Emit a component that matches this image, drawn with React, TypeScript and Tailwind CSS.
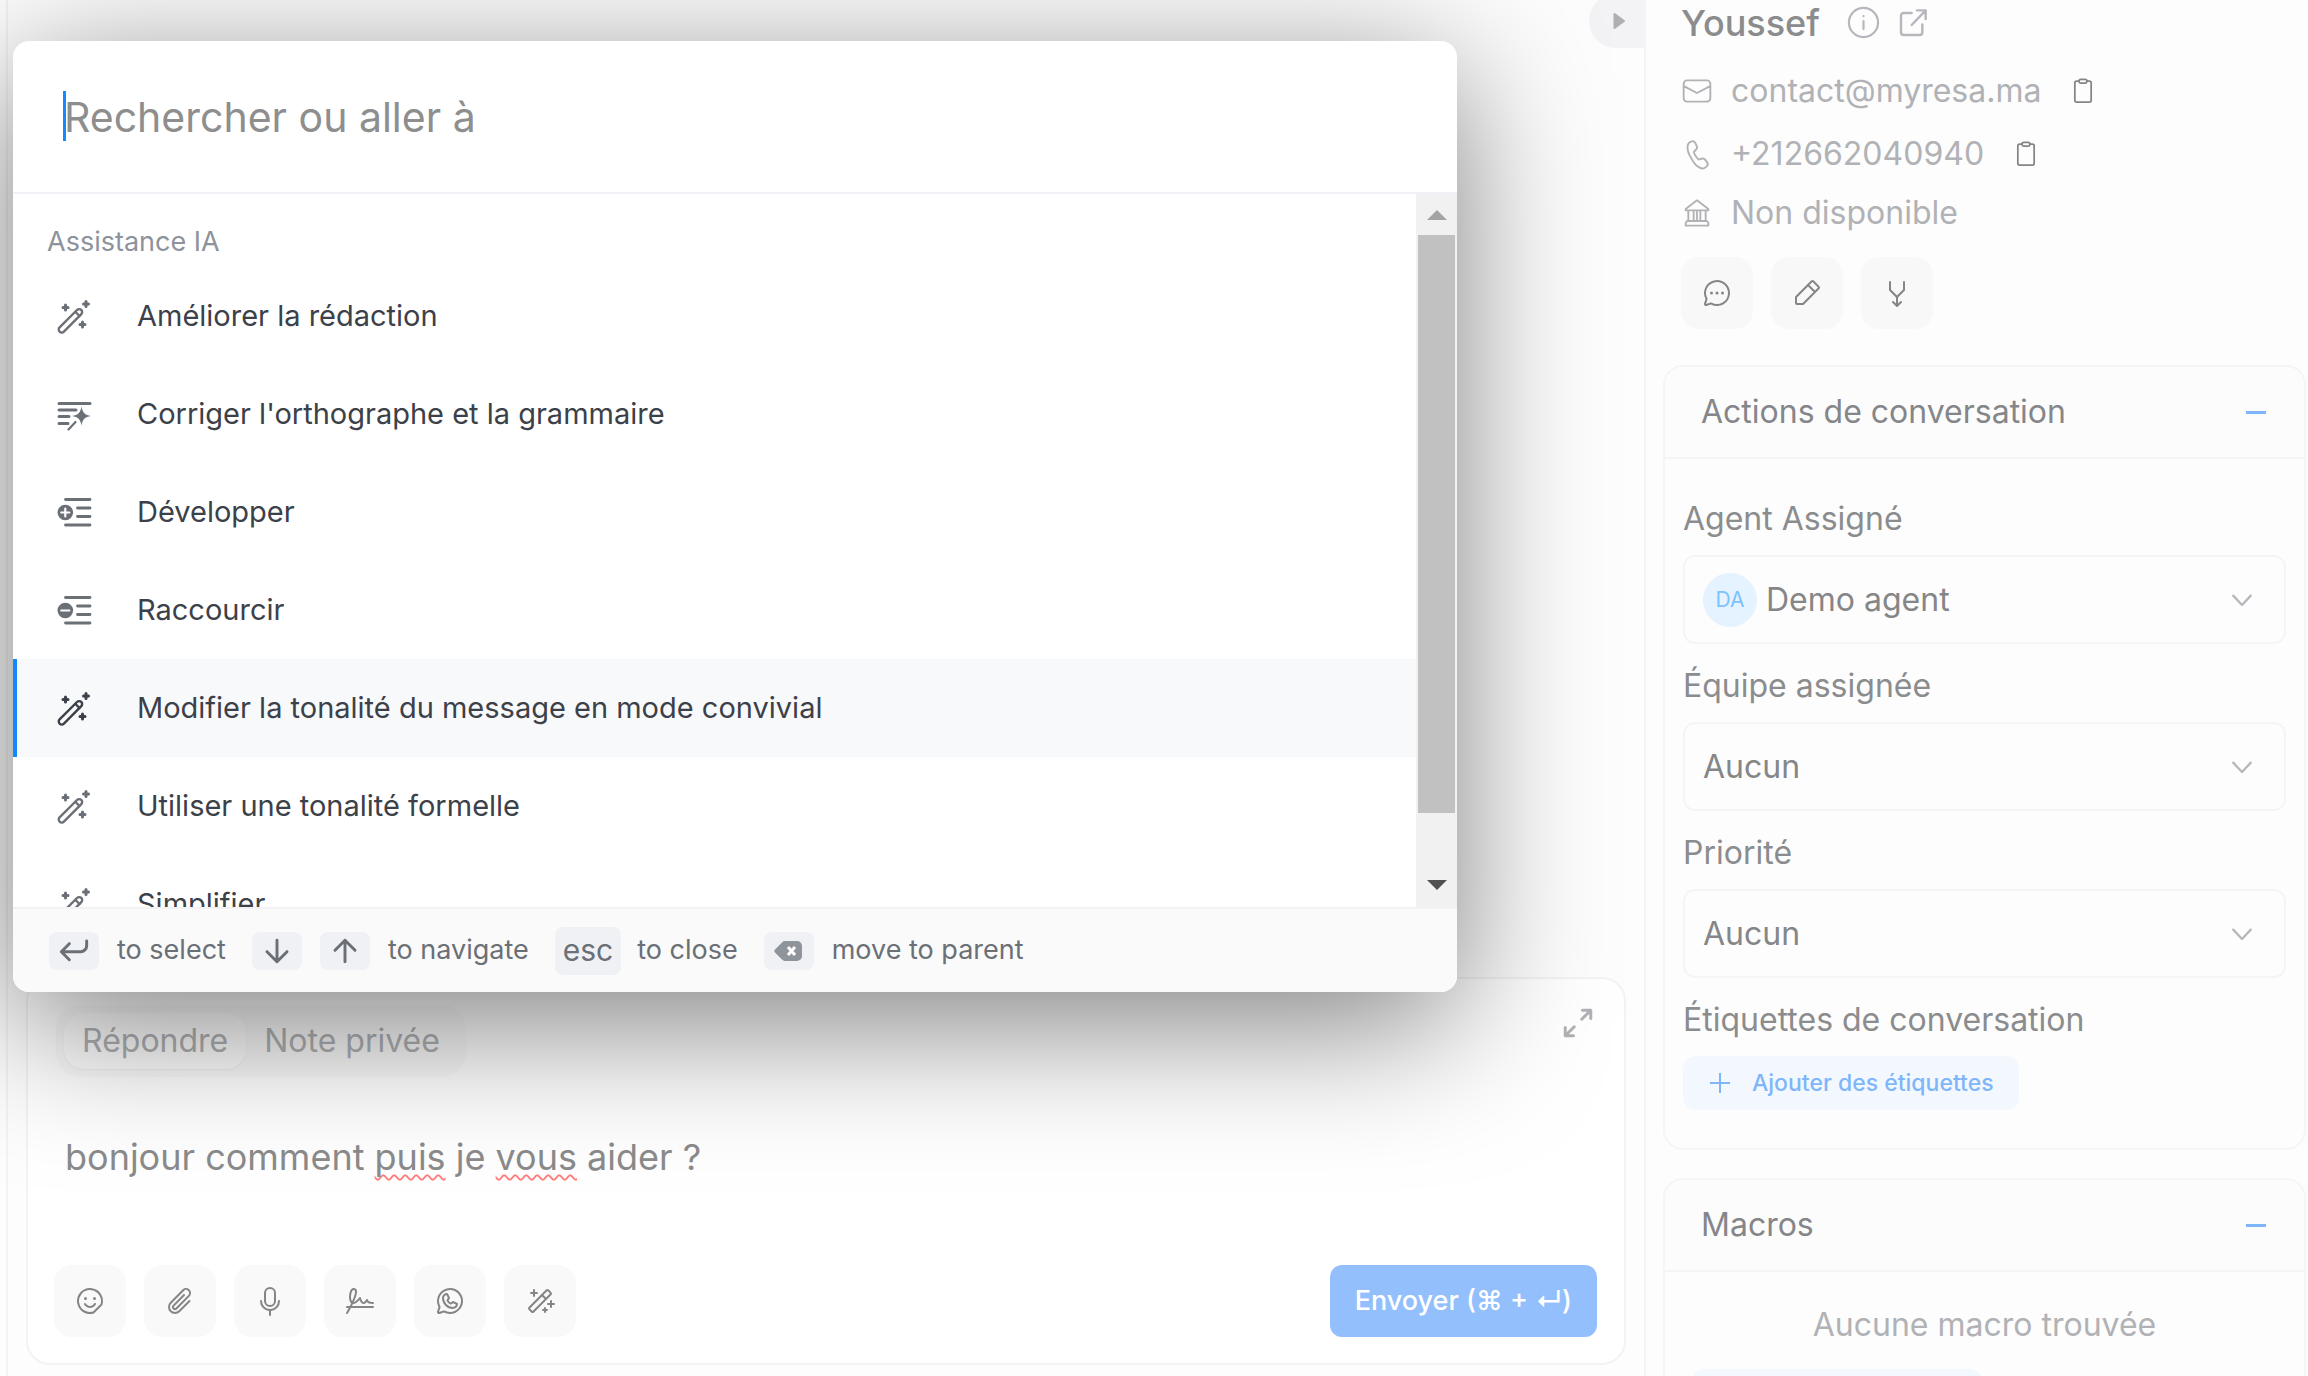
import React, { useState } from 'react';
import {
  PiArrowsMerge,
  PiChatCircleDots,
  PiMagicWand,
  PiMicrophone,
  PiPaperclip,
  PiPencilSimple,
  PiSignature,
  PiSmileySticker,
  PiWhatsappLogo,
} from 'react-icons/pi';

// ============================================================
// Conversation view with the command bar opened on top of it
// ============================================================

type IconName = 'wand' | 'grammar' | 'expand' | 'shorten';

interface Command {
  id: string;
  title: string;
  icon: IconName;
}

const COMMANDS: Command[] = [
  { id: 'rephrase', title: 'Améliorer la rédaction', icon: 'wand' },
  { id: 'grammar', title: "Corriger l'orthographe et la grammaire", icon: 'grammar' },
  { id: 'expand', title: 'Développer', icon: 'expand' },
  { id: 'shorten', title: 'Raccourcir', icon: 'shorten' },
  { id: 'friendly', title: 'Modifier la tonalité du message en mode convivial', icon: 'wand' },
  { id: 'formal', title: 'Utiliser une tonalité formelle', icon: 'wand' },
  { id: 'simplify', title: 'Simplifier', icon: 'wand' },
];

const COMPOSER_TOOLS = [
  { label: 'Emoji', Icon: PiSmileySticker },
  { label: 'Pièce jointe', Icon: PiPaperclip },
  { label: 'Audio', Icon: PiMicrophone },
  { label: 'Signature', Icon: PiSignature },
  { label: 'WhatsApp', Icon: PiWhatsappLogo },
  { label: 'Assistance IA', Icon: PiMagicWand },
];

const CONTACT_TOOLS = [
  { label: 'Nouveau message', Icon: PiChatCircleDots },
  { label: 'Modifier', Icon: PiPencilSimple },
  { label: 'Fusionner', Icon: PiArrowsMerge },
];

// ---------- Icons ----------

function WandIcon() {
  return (
    <svg className="size-9" viewBox="0 0 36 36" fill="none" stroke="currentColor" strokeWidth="2.4" strokeLinecap="round">
      <path d="M3.600 29.400 21 12a3 3 0 0 1 4.300 4.200L7.900 33.600a3 3 0 0 1-4.300-4.200Z" />
      <path d="m19.500 14 4 4" />
      <path d="M9.500 7v5M7 9.500h5M30 3.500v5M27.500 6h5M26.500 24v5M24 26.500h5" strokeWidth="3" />
    </svg>
  );
}

function GrammarIcon() {
  return (
    <svg className="size-9" viewBox="0 0 36 36" fill="none" stroke="currentColor" strokeWidth="3" strokeLinecap="round">
      <path d="M3 7.500h31M3 14h17M3 20.500h10M3 27.500h9" />
      <path d="m19.500 26-7 7.500" strokeWidth="2.200" />
      <path
        d="M25.500 10.500c1.200 6.200 3.200 8.500 9.500 9.500-6.300 1-8.300 3.200-9.500 9.500-1.200-6.300-3.200-8.500-9.500-9.500 6.300-1 8.300-3.300 9.500-9.500Z"
        fill="currentColor"
        stroke="none"
      />
    </svg>
  );
}

function LengthIcon({ plus = false }: { plus?: boolean }) {
  return (
    <svg className="size-9" viewBox="0 0 36 36" fill="none" stroke="currentColor" strokeWidth="2.800" strokeLinecap="round">
      <path d="M9.500 5.500H34M21.500 14H34M21.500 22.500H34M9.500 31H34" />
      <circle cx="9.300" cy="18.500" r="7.800" fill="currentColor" stroke="none" />
      <path d={plus ? 'M5.300 18.500h8M9.300 14.500v8' : 'M5.300 18.500h8'} stroke="#fff" strokeWidth="2.200" />
    </svg>
  );
}

function CommandIcon({ name }: { name: IconName }) {
  if (name === 'grammar') return <GrammarIcon />;
  if (name === 'expand') return <LengthIcon plus />;
  if (name === 'shorten') return <LengthIcon />;
  return <WandIcon />;
}

function StrokeIcon({ d, className }: { d: string; className: string }) {
  return (
    <svg
      className={className}
      viewBox="0 0 24 24"
      fill="none"
      stroke="currentColor"
      strokeLinecap="round"
      strokeLinejoin="round"
    >
      <path d={d} />
    </svg>
  );
}

function ClipboardButton() {
  return (
    <button type="button" aria-label="Copier" className="ml-7 text-[#858585]">
      <StrokeIcon
        className="size-7 stroke-[1.5]"
        d="M8.500 3.500H6.500A1.500 1.500 0 0 0 5 5v15a1.500 1.500 0 0 0 1.500 1.500h11A1.500 1.500 0 0 0 19 20V5a1.500 1.500 0 0 0-1.500-1.500h-2M10.200 2h3.600a1.600 1.600 0 0 1 0 3.200h-3.600a1.600 1.600 0 0 1 0-3.200Z"
      />
    </button>
  );
}

// ---------- Command bar ----------

function Key({ children }: { children: React.ReactNode }) {
  return (
    <kbd className="flex h-[38px] w-[50px] items-center justify-center rounded-lg bg-[#f0f1f5]">
      {children}
    </kbd>
  );
}

function CommandBar() {
  const [selected, setSelected] = useState('friendly');

  return (
    <div className="pointer-events-none absolute inset-0 pt-[41px] pl-[13px]">
      <div
        role="dialog"
        aria-label="Commandes"
        className="pointer-events-auto w-full max-w-[1444px] overflow-hidden rounded-2xl bg-white shadow-[0_32px_140px_rgba(0,0,0,0.5)]"
      >
        <div className="relative h-[153px] border-b-2 border-[#f0f2f8] px-[51px]">
          <input
            type="text"
            aria-label="Rechercher ou aller à"
            placeholder="Rechercher ou aller à"
            className="h-[151px] w-full bg-transparent text-[41px] text-[#3c4149] outline-none placeholder:text-[#8e8e8e]"
          />
          <span className="absolute top-[50px] left-[50px] h-[50px] w-[3px] bg-[#1488ff]" />
        </div>

        <div className="flex h-[713px]">
          <div className="flex-1 overflow-hidden">
            <div className="flex h-[73px] items-center pt-6 pl-[34px] text-[27px] text-[#8d929c]">
              Assistance IA
            </div>
            {COMMANDS.map((command) => (
              <button
                key={command.id}
                type="button"
                onClick={() => setSelected(command.id)}
                className={`flex h-[98px] w-full items-center border-l-4 pl-[39px] text-left text-[29px] text-[#3c4149] ${
                  command.id === selected ? 'border-[#1488ff] bg-[#f8f9fb]' : 'border-transparent'
                }`}
              >
                <span className={`mr-[45px] ${command.id === selected ? 'text-[#3c4149]' : 'text-[#6b6f76]'}`}>
                  <CommandIcon name={command.icon} />
                </span>
                {command.title}
              </button>
            ))}
          </div>

          {/* Scrollbar */}
          <div className="flex w-[41px] shrink-0 flex-col items-center bg-[#f1f1f1]">
            <svg className="h-[41px] w-5 text-[#a3a3a3]" viewBox="0 0 20 41" fill="currentColor">
              <path d="M0 26 10 16l10 10Z" />
            </svg>
            <div className="h-[578px] w-[37px] bg-[#c1c1c1]" />
            <svg className="mt-auto h-[46px] w-5 text-[#505050]" viewBox="0 0 20 46" fill="currentColor">
              <path d="M0 19h20L10 29Z" />
            </svg>
          </div>
        </div>

        <div className="flex h-[85px] items-center border-t-2 border-[#f2f2f5] bg-[#fafafa] pl-9 text-[27px] text-[#6b6f76]">
          <Key>
            <StrokeIcon className="size-8 stroke-[2.2]" d="M21.500 4.500V8a4.500 4.500 0 0 1-4.500 4.500H3M8.500 18.500l-6-6 6-6" />
          </Key>
          <span className="ml-[18px]">to select</span>
          <div className="ml-[26px] flex gap-[18px]">
            <Key>
              <StrokeIcon className="size-8 stroke-[2.2]" d="M12 4v16M4.500 12.500 12 20l7.500-7.500" />
            </Key>
            <Key>
              <StrokeIcon className="size-8 stroke-[2.2]" d="M12 20V4M4.500 11.500 12 4l7.500 7.500" />
            </Key>
          </div>
          <span className="ml-[18px]">to navigate</span>
          <kbd className="ml-[26px] flex h-12 items-center rounded-lg bg-[#f0f1f5] px-2 font-[Inter,sans-serif] text-[30px]">
            esc
          </kbd>
          <span className="ml-4">to close</span>
          <div className="ml-[26px]">
            <Key>
              <svg className="h-6 w-8" viewBox="0 0 32 24">
                <path d="M12 2h12a5 5 0 0 1 5 5v10a5 5 0 0 1-5 5H12a4 4 0 0 1-3-1.400L2 13.500a2 2 0 0 1 0-3L9 3.400A4 4 0 0 1 12 2Z" fill="#8f939a" />
                <path d="m15 8 7 8M22 8l-7 8" stroke="#fff" strokeWidth="3" />
              </svg>
            </Key>
          </div>
          <span className="ml-[18px]">move to parent</span>
        </div>
      </div>
    </div>
  );
}

// ---------- Reply box ----------

function ReplyBox() {
  const [message, setMessage] = useState('bonjour comment puis je vous aider ?');
  const misspelled = ['puis', 'vous'];

  return (
    <section className="mx-[18px] mb-[11px] flex h-[388px] flex-col rounded-3xl border-2 border-[#f3f3f4] bg-white">
      <div className="flex items-start justify-between pt-[26px] pr-7 pl-7">
        <div className="flex h-[72px] items-center rounded-3xl bg-[#fbfbfb] px-2 text-[32px] text-[#b0b2b5]">
          <button type="button" className="h-14 rounded-[20px] bg-white px-[18px] shadow-xs">
            Répondre
          </button>
          <button type="button" className="h-14 px-[18px]">
            Note privée
          </button>
        </div>
        <button type="button" aria-label="Agrandir" className="text-[#b0b2b5]">
          <StrokeIcon className="size-9 stroke-[2]" d="M14.500 9.500 20.500 3.500M15 3.500h5.500V9M9.500 14.500 3.500 20.500M3.500 15v5.500H9" />
        </button>
      </div>

      <div className="relative mx-[37px] mt-[53px] h-[100px] text-[36px] leading-[54px]">
        {/* Spelling marks sit behind the text */}
        <div aria-hidden="true" className="absolute inset-0 whitespace-pre-wrap text-transparent">
          {message.split(' ').map((word, i) => (
            <React.Fragment key={i}>
              {i > 0 && ' '}
              <span
                className={
                  misspelled.includes(word)
                    ? 'underline decoration-[#ff7f7f] decoration-wavy decoration-2 underline-offset-4 [text-decoration-skip-ink:none]'
                    : ''
                }
              >
                {word}
              </span>
            </React.Fragment>
          ))}
        </div>
        <textarea
          aria-label="Message"
          spellCheck={false}
          value={message}
          onChange={(e) => setMessage(e.target.value)}
          className="absolute inset-0 block size-full resize-none overflow-hidden bg-transparent text-[#8b8b8b] outline-none"
        />
      </div>

      <div className="mt-auto mb-[26px] flex items-center justify-between pr-[27px] pl-[26px]">
        <div className="flex gap-[18px]">
          {COMPOSER_TOOLS.map(({ label, Icon }) => (
            <button
              key={label}
              type="button"
              aria-label={label}
              className="flex size-[72px] items-center justify-center rounded-[18px] bg-[#f9f9f9] text-[#858585]"
            >
              <Icon className="size-8" />
            </button>
          ))}
        </div>
        <button type="button" className="h-[72px] rounded-xl bg-[#93c0fd] px-[25px] text-[27px] font-medium text-white">
          Envoyer (⌘ + ↵)
        </button>
      </div>
    </section>
  );
}

// ---------- Sidebar ----------

function ContactCard() {
  return (
    <div className="pl-[35px] text-[32px] text-[#b0b2b5]">
      <div className="flex h-[45px] items-center text-[#b6b7bd]">
        <h2 className="text-[36px] font-medium text-[#8b8c8d]">Youssef</h2>
        <button type="button" aria-label="Informations" className="ml-[26px]">
          <StrokeIcon className="size-[35px] stroke-[1.5]" d="M22 12a10 10 0 1 1-20 0 10 10 0 0 1 20 0ZM12 11v5.500M12 7.600v.1" />
        </button>
        <a href="#contact" aria-label="Ouvrir la fiche" className="ml-4">
          <StrokeIcon className="size-8 stroke-[1.8]" d="M11 4.500H5a2 2 0 0 0-2 2V19a2 2 0 0 0 2 2h12a2 2 0 0 0 2-2v-6M15 2.500h6.500V9M21.500 2.500 11 13.500" />
        </a>
      </div>
      <div className="mt-[22px] flex h-12 items-center">
        <StrokeIcon className="mr-[18px] size-8 stroke-[1.4]" d="M4.500 4h15A2.500 2.500 0 0 1 22 6.500v11a2.500 2.500 0 0 1-2.500 2.500h-15A2.500 2.500 0 0 1 2 17.500v-11A2.500 2.500 0 0 1 4.500 4ZM2.500 8.500 12 13.500l9.500-5" />
        <a href="mailto:contact@myresa.ma">contact@myresa.ma</a>
        <ClipboardButton />
      </div>
      <div className="mt-[15px] flex h-12 items-center">
        <StrokeIcon className="mr-[18px] size-8 stroke-[1.4]" d="m7 2.900 1-.3c1.200-.4 2.400.2 2.900 1.400l.9 2c.4 1 .2 2.100-.6 2.800l-1.300 1.300c-.5.500.3 2.300 1.300 3.800 1 1.500 2 2.400 2.600 2.200l1.800-.6c1-.3 2 0 2.600.9l1.300 1.700c.7 1 .6 2.400-.3 3.200l-.8.7c-.9.800-2.100 1.100-3.200.7-3-.9-5.500-3.400-7.500-7.600C5 10.900 4.400 7.400 5.300 4.800c.3-.9.900-1.600 1.700-1.900Z" />
        <a href="tel:+212662040940">+212662040940</a>
        <ClipboardButton />
      </div>
      <div className="mt-[11px] flex h-12 items-center">
        <StrokeIcon className="mr-[18px] size-8 stroke-[1.4]" d="M12 2.500 3.500 9v1h17V9ZM5.500 10v8M9.500 10v8M12 10v8M14.500 10v8M18.500 10v8M4.500 18h15l1 1.500v2h-17v-2Z" />
        <span>Non disponible</span>
      </div>
      <div className="mt-5 flex gap-[18px]">
        {CONTACT_TOOLS.map(({ label, Icon }) => (
          <button
            key={label}
            type="button"
            aria-label={label}
            className="flex size-[72px] items-center justify-center rounded-[18px] bg-[#f8f8f8] text-[#858585]"
          >
            <Icon className="size-8" />
          </button>
        ))}
      </div>
    </div>
  );
}

function Panel({ title, children }: { title: string; children: React.ReactNode }) {
  return (
    <section className="mr-[2px] ml-[17px] shrink-0 overflow-hidden rounded-[20px] border-2 border-[#f5f5f6]">
      <button
        type="button"
        className="flex h-[92px] w-full items-center justify-between border-b-2 border-[#f5f5f6] bg-[#fcfcfc] pr-[38px] pl-9 text-[32px] text-[#85868a]"
      >
        {title}
        <span className="h-[3px] w-5 bg-[#7fb6fa]" />
      </button>
      <div className="px-[18px]">{children}</div>
    </section>
  );
}

interface SelectFieldProps {
  id: string;
  label: string;
  value: string;
  initials?: string;
}

function SelectField({ id, label, value, initials }: SelectFieldProps) {
  return (
    <div className="mb-[18px]">
      <label htmlFor={id} className="block h-[60px] text-[32px] leading-[48px] text-[#8b8c8e]">
        {label}
      </label>
      <div className="relative">
        {initials && (
          <span className="absolute top-[18px] left-5 flex size-[54px] items-center justify-center rounded-full bg-[#e5f2ff] text-[21px] text-[#7cc2ff]">
            {initials}
          </span>
        )}
        <select
          id={id}
          defaultValue={value}
          className={`block h-[89px] w-full appearance-none rounded-xl border-2 border-[#f5f5f6] bg-transparent text-[32px] text-[#858687] outline-none ${
            initials ? 'pl-[81px]' : 'pl-[18px]'
          }`}
        >
          <option>{value}</option>
        </select>
        <span className="pointer-events-none absolute top-[30px] right-[29px] text-[#b6b7bd]">
          <StrokeIcon className="size-[30px] stroke-[1.8]" d="m5 8.500 7 7.500 7-7.500" />
        </span>
      </div>
    </div>
  );
}

function Sidebar() {
  return (
    <aside className="flex w-[664px] shrink-0 flex-col overflow-hidden border-l-2 border-[#f4f4f5] bg-[#fdfdfd]">
      <ContactCard />
      <div className="mt-9 flex flex-col gap-7">
        <Panel title="Actions de conversation">
          <div className="pt-9 pb-[38px]">
            <SelectField id="agent" label="Agent Assigné" value="Demo agent" initials="DA" />
            <SelectField id="team" label="Équipe assignée" value="Aucun" />
            <SelectField id="priority" label="Priorité" value="Aucun" />
            <h3 className="h-[60px] text-[32px] leading-[48px] text-[#8b8c8e]">Étiquettes de conversation</h3>
            <button
              type="button"
              className="flex h-[54px] items-center gap-[22px] rounded-xl bg-[#f3f8ff] pr-[25px] pl-[27px] text-[23px] font-medium text-[#7fb6fa]"
            >
              <svg className="size-5" viewBox="0 0 20 20" stroke="currentColor" strokeWidth="2">
                <path d="M10 0v20M0 10h20" />
              </svg>
              Ajouter des étiquettes
            </button>
          </div>
        </Panel>
        <Panel title="Macros">
          <p className="pt-[29px] text-center text-[32px] leading-[48px] text-[#b0b2b5]">Aucune macro trouvée</p>
          <button
            type="button"
            aria-label="Créer une macro"
            className="mt-5 ml-[9px] block h-[54px] w-[290px] rounded-xl bg-[#f3f8ff]"
          />
        </Panel>
      </div>
    </aside>
  );
}

export default function App() {
  return (
    <div className="relative flex h-screen overflow-hidden bg-[#fdfdfd] font-[Inter,'Liberation_Sans',sans-serif]">
      <main className="ml-[6px] flex min-w-0 flex-1 flex-col border-l-2 border-[#f2f3f4]">
        <div className="flex flex-1 items-start justify-end overflow-hidden">
          <button
            type="button"
            aria-label="Masquer le panneau"
            className="-mt-[6px] flex h-[54px] w-[55px] items-center justify-center rounded-l-full rounded-br-lg bg-[#f3f3f5] pl-1 text-[#aeafb3]"
          >
            <svg className="h-[18px] w-3" viewBox="0 0 12 18" fill="currentColor" stroke="currentColor" strokeLinejoin="round" strokeWidth="2">
              <path d="M1.500 2v14L11 9Z" />
            </svg>
          </button>
        </div>
        <ReplyBox />
      </main>
      <Sidebar />
      <CommandBar />
    </div>
  );
}
